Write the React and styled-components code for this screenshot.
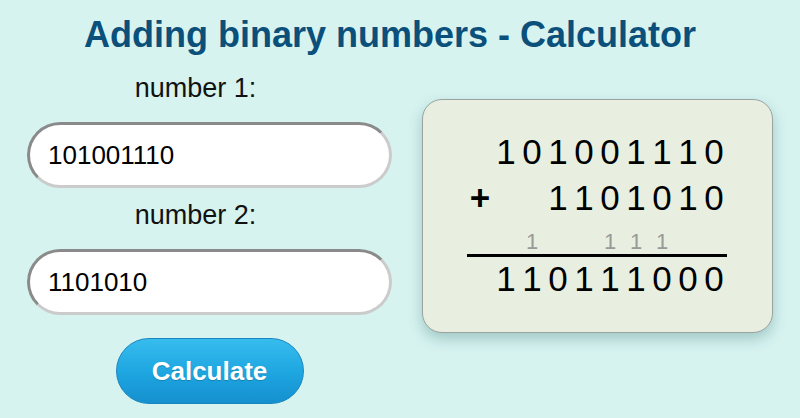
import React, { useState } from 'react';
import styled, { createGlobalStyle } from 'styled-components';

const GlobalStyle = createGlobalStyle`
  body {
    margin: 0;
    background: #d6f3f0;
    font-family: "Liberation Sans", Arial, sans-serif;
  }
`;

function addBinary(a, b) {
  const len = Math.max(a.length, b.length);
  const x = a.padStart(len, '0');
  const y = b.padStart(len, '0');
  let carry = 0;
  const sum = [];
  const carries = new Array(len).fill('');
  for (let i = len - 1; i >= 0; i--) {
    const s = Number(x[i]) + Number(y[i]) + carry;
    sum.unshift(String(s % 2));
    carry = s > 1 ? 1 : 0;
    if (carry && i > 0) carries[i - 1] = '1';
  }
  if (carry) sum.unshift('1');
  return { sum: sum.join(''), carries };
}

// right-align a list of characters into a fixed number of columns
function toCells(chars, cols) {
  const list = Array.isArray(chars) ? chars : chars.split('');
  return [...new Array(Math.max(cols - list.length, 0)).fill(''), ...list];
}

const COLS = 10;

function App() {
  const [first, setFirst] = useState('101001110');
  const [second, setSecond] = useState('1101010');
  const [result, setResult] = useState({ a: '101001110', b: '1101010' });

  const { sum, carries } = addBinary(result.a, result.b);

  const row1 = toCells(result.a, COLS);
  const row2 = toCells(result.b, COLS);
  row2[0] = '+';
  const carryRow = toCells(carries, COLS);
  const sumRow = toCells(sum, COLS);

  return (
    <Page>
      <GlobalStyle />
      <Title>Adding binary numbers - Calculator</Title>
      <Main>
        <Form>
          <Label>number 1:</Label>
          <Field value={first} onChange={(e) => setFirst(e.target.value)} />
          <Label>number 2:</Label>
          <Field value={second} onChange={(e) => setSecond(e.target.value)} />
          <Button onClick={() => setResult({ a: first, b: second })}>Calculate</Button>
        </Form>
        <Card>
          <Sum>
            {row1.map((d, i) => <Digit key={'a' + i}>{d}</Digit>)}
            {row2.map((d, i) => <Digit key={'b' + i} $sign={d === '+'}>{d}</Digit>)}
            {carryRow.map((d, i) => <Carry key={'c' + i}>{d}</Carry>)}
            <Rule />
            {sumRow.map((d, i) => <Digit key={'s' + i} $result>{d}</Digit>)}
          </Sum>
        </Card>
      </Main>
    </Page>
  );
}

export default App;

const Page = styled.div`
  width: 800px;
  height: 418px;
  box-sizing: border-box;
  padding-top: 15px;
  overflow: hidden;
`;

const Title = styled.h1`
  margin: 0 0 6px;
  padding-right: 20px;
  text-align: center;
  font-size: 36px;
  line-height: 40px;
  font-weight: bold;
  color: #0b4f7b;
`;

const Main = styled.div`
  display: flex;
  align-items: flex-start;
  gap: 30px;
  padding-left: 27px;
`;

const Form = styled.div`
  width: 365px;
  display: flex;
  flex-direction: column;
  align-items: center;
`;

const Label = styled.div`
  margin: 12px 28px 19px 0;
  font-size: 27px;
  line-height: 30px;
  color: #111;
`;

const Field = styled.input`
  width: 365px;
  height: 66px;
  box-sizing: border-box;
  padding: 0 18px;
  border: 3px solid;
  border-color: #8a8a8a #cbcbcb #cbcbcb #8a8a8a;
  border-radius: 33px;
  background: #fff;
  font-family: inherit;
  font-size: 26px;
  color: #000;
  outline: none;
`;

const Button = styled.button`
  margin-top: 23px;
  width: 188px;
  height: 66px;
  border: 1px solid #1a86c0;
  border-radius: 33px;
  background: linear-gradient(to bottom, #36bced 0%, #1da5e0 55%, #1590cf 100%);
  color: #fff;
  font-family: inherit;
  font-size: 26px;
  font-weight: bold;
  text-shadow: 0 1px 1px rgba(0, 0, 0, 0.2);
  cursor: pointer;
`;

const Card = styled.div`
  margin-top: 38px;
  width: 351px;
  height: 234px;
  box-sizing: border-box;
  padding: 29px 44px 0;
  border: 1px solid #9aa3a0;
  border-radius: 20px;
  background: #e8efe0;
  box-shadow: 0 6px 14px rgba(0, 70, 70, 0.25);
`;

const Sum = styled.div`
  display: grid;
  grid-template-columns: repeat(${COLS}, 26px);
`;

const Digit = styled.div`
  text-align: center;
  font-size: 35px;
  font-weight: ${(p) => (p.$sign ? 'bold' : 'normal')};
  line-height: ${(p) => (p.$result ? '44px' : '46px')};
  color: #000;
`;

const Carry = styled.div`
  height: 33px;
  display: flex;
  align-items: flex-end;
  justify-content: center;
  font-size: 22px;
  line-height: 24px;
  color: #999;
`;

const Rule = styled.div`
  grid-column: 1 / -1;
  height: 3px;
  background: #000;
`;
